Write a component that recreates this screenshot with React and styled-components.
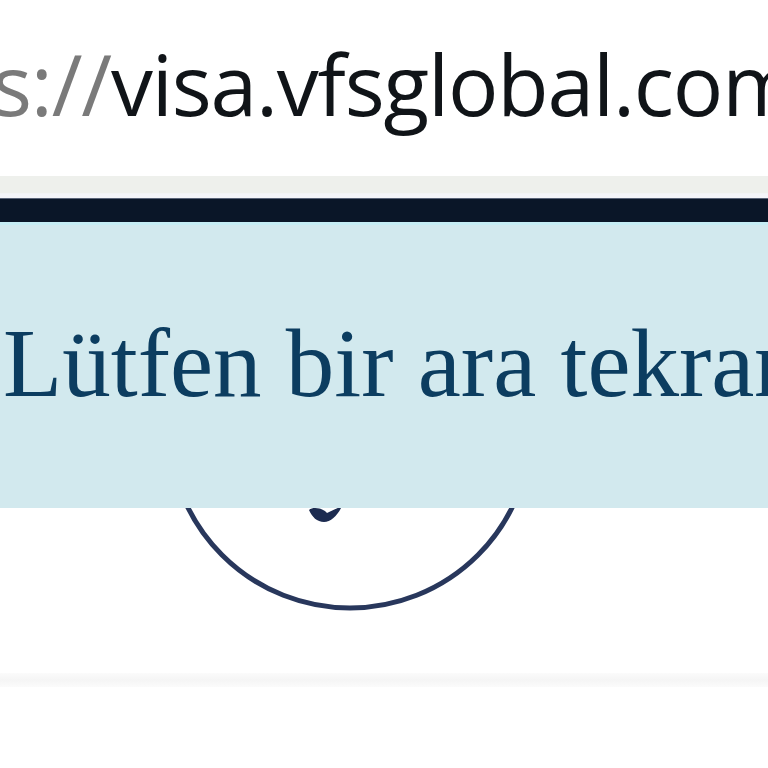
import React from 'react';
import styled, { createGlobalStyle } from 'styled-components';

const GlobalStyle = createGlobalStyle`
  html, body {
    margin: 0;
    padding: 0;
    background: #ffffff;
    overflow: hidden;
  }
`;

const Page = styled.div`
  width: 768px;
  height: 768px;
  overflow: hidden;
  display: flex;
  flex-direction: column;
  background: #ffffff;
`;

const AddressBar = styled.div`
  height: 176px;
  flex-shrink: 0;
  background: #ffffff;
  overflow: hidden;
  white-space: nowrap;
`;

const UrlText = styled.div`
  margin-left: -8px;
  padding-top: 24px;
  font-family: "Open Sans", "Noto Sans", sans-serif;
  font-size: 84px;
  line-height: 120px;
  letter-spacing: -1.2px;
  color: #101418;
`;

const Scheme = styled.span`
  color: #7a7a7a;
`;

const Strip = styled.div`
  height: 22px;
  flex-shrink: 0;
  background: linear-gradient(#eef0ec 0%, #eef0ec 78%, #f4f5f9 80%, #f4f5f9 100%);
`;

const NavBar = styled.div`
  height: 24px;
  flex-shrink: 0;
  background: #0a1628;
  border-top: 1px solid #5a6478;
  box-sizing: border-box;
`;

const Alert = styled.div`
  position: relative;
  z-index: 1;
  height: 286px;
  flex-shrink: 0;
  box-sizing: border-box;
  border-top: 3px solid #c6edf4;
  background: #d2e9ee;
  display: flex;
  align-items: center;
  overflow: hidden;
  white-space: nowrap;
`;

const AlertText = styled.p`
  margin: 0 0 6px 3px;
  font-family: "Liberation Serif", "Times New Roman", serif;
  font-size: 97px;
  line-height: 1;
  color: #0c3d60;
`;

const Stage = styled.div`
  display: flex;
  flex-direction: column;
  flex-shrink: 0;
`;

const IconWrap = styled.div`
  margin: -266px 0 0 165px;
  width: 370px;
  height: 370px;
`;

const Divider = styled.div`
  margin-top: 61px;
  height: 14px;
  background: linear-gradient(#fbfbfb, #f5f5f5 50%, #fbfbfb);
`;

const Rest = styled.div`
  flex: 1;
  background: #ffffff;
`;

const FaceIcon = () => (
  <svg width="370" height="370" viewBox="0 0 370 370">
    <circle cx="185" cy="185" r="181" fill="none" stroke="#28375c" strokeWidth="5" />
    <path
      d="M144 268 C149 264 159 267 162 271 C167 269 172 266 177 264 C173 273 166 280 159 280 C152 280 147 275 144 268 Z"
      fill="#1c2b50"
    />
  </svg>
);

const App = () => (
  <>
    <GlobalStyle />
    <Page>
      <AddressBar>
        <UrlText>
          <Scheme>s://</Scheme>visa.vfsglobal.com/tur/tr/pol
        </UrlText>
      </AddressBar>
      <Strip />
      <NavBar />
      <Alert>
        <AlertText>Lütfen bir ara tekrar deneyin.</AlertText>
      </Alert>
      <Stage>
        <IconWrap>
          <FaceIcon />
        </IconWrap>
        <Divider />
      </Stage>
      <Rest />
    </Page>
  </>
);

export default App;
